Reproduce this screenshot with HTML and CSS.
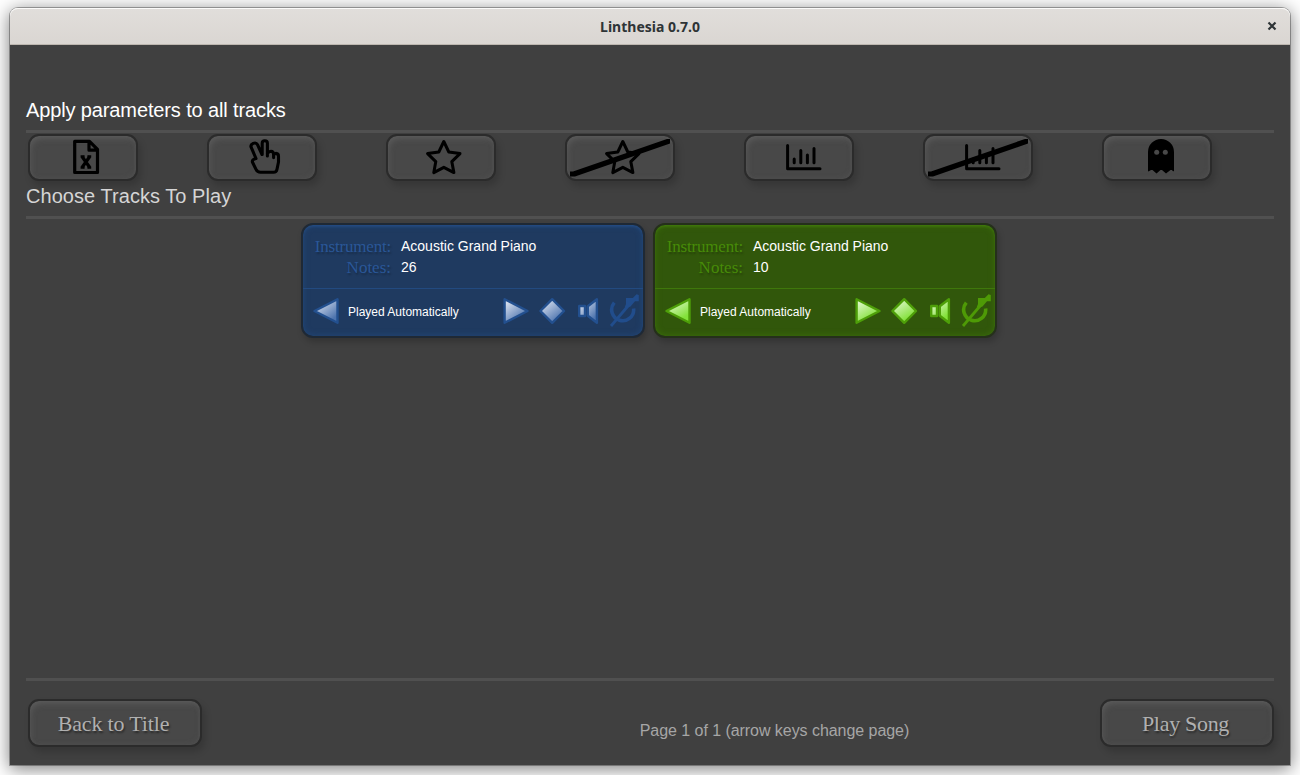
FILE: index.html
```html
<!DOCTYPE html>
<html lang="en">
<head>
<meta charset="utf-8">
<title>Linthesia 0.7.0</title>
<link rel="stylesheet" href="styles.css">
</head>
<body>
<svg class="defs" width="0" height="0" aria-hidden="true">
  <defs>
    <linearGradient id="blue" x1="0" y1="0" x2="0.8" y2="1"><stop offset="0.15" stop-color="#d3dcec"/><stop offset="0.9" stop-color="#4d74ae"/></linearGradient>
    <linearGradient id="green" x1="0" y1="0" x2="0.6" y2="1"><stop offset="0.15" stop-color="#dcf7c6"/><stop offset="0.9" stop-color="#83e13a"/></linearGradient>
    <symbol id="star" viewBox="0 0 110 47"><path d="M57.8 7.5 62.8 18 74 19.6 65.8 27.6 67.9 38.6 57.8 33.3 47.8 38.6 49.8 27.6 41.6 19.6 52.8 18Z" fill="none" stroke="#000" stroke-width="3" stroke-linejoin="round"/></symbol>
    <symbol id="chart" viewBox="0 0 110 47"><path d="M43.6 11.5V34.7H76M50.2 25V28.7M56.8 16.5V28.7M63.4 21V28.7M70 14.5V28.7" fill="none" stroke="#000" stroke-width="3" stroke-linecap="round" stroke-linejoin="round"/></symbol>
    <symbol id="slash" viewBox="0 0 110 47"><path d="M5 37.5H8L102 5H105V9.5L10 42.5H5Z"/></symbol>
    <symbol id="left" viewBox="0 0 30 36"><path d="M3.5 18 26.5 6.2V29.8Z"/></symbol>
    <symbol id="right" viewBox="0 0 30 36"><path d="M26.5 18 3.6 6.2V29.8Z"/></symbol>
    <symbol id="diamond" viewBox="0 0 30 36"><path d="M15.2 6.2 27 18 15.2 29.8 3.4 18Z"/></symbol>
    <symbol id="speaker" viewBox="0 0 30 36"><path d="M6.2 13H12V23H6.2ZM14.8 13.2 23.9 6.2V29.8L14.8 22.8Z"/></symbol>
    <symbol id="retry" viewBox="0 0 30 36"><path d="M5.3 9.6A11 11 0 1 0 24.6 15.5" fill="none" stroke="currentColor" stroke-width="3.6"/><path d="M2 33 19 13" fill="none" stroke="currentColor" stroke-width="2.8"/><path d="M17 5H23.8L27.5 1.2 29.8 2V8.2H26L21.5 13.5 16.5 15.5 15.8 14 17 11Z" fill="currentColor"/></symbol>
  </defs>
</svg>
<div class="window">
  <header class="titlebar"><span class="title">Linthesia 0.7.0</span><svg class="close" viewBox="0 0 10 10"><path d="M1.5 1.5 8.5 8.5M8.5 1.5 1.5 8.5"/></svg></header>
  <main class="content">
    <h1 class="heading heading-all"><span>Apply parameters to all tracks</span></h1>
    <div class="toolbar">
      <button class="btn tool"><svg viewBox="0 0 110 47"><path d="M46.7 7.3H61.5L69.5 15.3V38.5H46.7ZM61 7.5V16.2H69.5" fill="none" stroke="#000" stroke-width="3.2" stroke-linejoin="round"/><path d="M54 22.5 61.8 33.5M61.8 22.5 54 33.5" fill="none" stroke="#000" stroke-width="3.2"/><path d="M52.6 22.4H56.6M59.4 22.4H63.2M52.6 33.6H56.6M59.4 33.6H63.2" fill="none" stroke="#000" stroke-width="2.4"/></svg></button>
      <button class="btn tool"><svg viewBox="0 0 110 47"><path d="M55.2 20.5V9.2Q55.2 6.7 57.8 6.7T60.4 9.2V22M55 20.5 50.6 10.8Q49.2 8.2 46.2 9.4 43.2 10.8 44.1 13.2L49 24.5Q44.8 25.4 45.4 28L49 35.4Q50.4 38.3 53.5 38.3H66.6Q69.4 38.3 70 35.2L71.5 28V22.3Q71.5 19.6 69 19.4L66.6 20.4Q66.5 17.3 64 17.3 61.6 17.4 60.4 19.5M66.6 20V23.6" fill="none" stroke="#000" stroke-width="3.1" stroke-linecap="round" stroke-linejoin="round"/></svg></button>
      <button class="btn tool"><svg viewBox="0 0 110 47"><use href="#star"/></svg></button>
      <button class="btn tool"><svg viewBox="0 0 110 47"><use href="#star"/><use href="#slash"/></svg></button>
      <button class="btn tool"><svg viewBox="0 0 110 47"><use href="#chart"/></svg></button>
      <button class="btn tool"><svg viewBox="0 0 110 47"><use href="#chart"/><use href="#slash"/></svg></button>
      <button class="btn tool"><svg viewBox="0 0 110 47"><path d="M46 37V18A13 13 0 0 1 72 18V37Q71 37.8 70 36L68.5 36 64 39.5 60 36H58.5L54.5 39.5 50.5 36H49L46.5 37.5Z"/><g fill="#484848"><circle cx="54.7" cy="18.3" r="2.5"/><circle cx="63.3" cy="18.3" r="2.5"/></g></svg></button>
    </div>
    <h2 class="heading heading-choose"><span>Choose Tracks To Play</span></h2>
    <div class="tracks">
      <section class="card card-blue">
        <div class="info">
          <span class="key">Instrument:</span><span class="value">Acoustic Grand Piano</span>
          <span class="key key-notes">Notes:</span><span class="value">26</span>
        </div>
        <div class="controls">
          <svg class="glyph"><use href="#left"/></svg><span class="mode">Played Automatically</span><svg class="glyph"><use href="#right"/></svg><svg class="glyph"><use href="#diamond"/></svg><svg class="glyph"><use href="#speaker"/></svg><svg class="retry"><use href="#retry"/></svg>
        </div>
      </section>
      <section class="card card-green">
        <div class="info">
          <span class="key">Instrument:</span><span class="value">Acoustic Grand Piano</span>
          <span class="key key-notes">Notes:</span><span class="value">10</span>
        </div>
        <div class="controls">
          <svg class="glyph"><use href="#left"/></svg><span class="mode">Played Automatically</span><svg class="glyph"><use href="#right"/></svg><svg class="glyph"><use href="#diamond"/></svg><svg class="glyph"><use href="#speaker"/></svg><svg class="retry"><use href="#retry"/></svg>
        </div>
      </section>
    </div>
    <footer class="footer">
      <button class="btn nav nav-back">Back to Title</button>
      <span class="page">Page 1 of 1 (arrow keys change page)</span>
      <button class="btn nav nav-play">Play Song</button>
    </footer>
  </main>
</div>
</body>
</html>
```
FILE: styles.css
```css
* { box-sizing: border-box; }
body {
  margin: 0;
  height: 775px;
  padding: 8px 10px 10px;
  overflow: hidden;
  background: #fff;
  font-family: "Liberation Sans", Arial, sans-serif;
}
.defs { position: absolute; }
.window {
  height: 757px;
  display: flex;
  flex-direction: column;
  border-radius: 8px 8px 0 0;
  box-shadow: 0 0 0 1px rgba(0, 0, 0, .3), 0 3px 18px 1px rgba(0, 0, 0, .5);
}
.titlebar {
  height: 37px;
  flex: none;
  display: grid;
  grid-template-columns: 1fr auto 1fr;
  align-items: center;
  border-radius: 8px 8px 0 0;
  border-bottom: 1px solid #bdb7b0;
  box-shadow: inset 0 1px #fbfaf9;
  background: linear-gradient(#e1dedb, #dad6d2);
}
.title {
  grid-column: 2;
  font: bold 14px "Noto Sans", sans-serif;
  color: #2e3436;
}
.close { width: 10px; height: 10px; justify-self: end; margin-right: 13px; }
.close path { stroke: #2e3436; stroke-width: 2.2; }
.content {
  flex: 1;
  display: flex;
  flex-direction: column;
  padding: 0 16px;
  background: #404040;
}
.heading {
  margin: 0;
  font-weight: normal;
  font-size: 20px;
  line-height: 24px;
  border-bottom: 3px solid #505050;
}
.heading-all { height: 88px; padding-top: 53px; color: #fff; letter-spacing: -.125px; }
.heading-choose { height: 38px; padding-top: 3px; color: #d5d5d5; letter-spacing: .05px; }
.toolbar { display: flex; gap: 69px; padding: 1px 2px 0; height: 48px; }
.btn {
  flex: none;
  padding: 0;
  border: 2px solid #2b2b2b;
  border-radius: 11px;
  background: #484848;
  box-shadow: inset 2px 4px 6px -2px #5e5e5e, inset -2px -2px 5px -2px #525252, 3px 5px 7px rgba(0, 0, 0, .16);
}
.tool { width: 110px; height: 47px; }
.tool svg { display: block; width: 110px; height: 47px; margin: -2px; }
.tracks { display: flex; justify-content: center; gap: 8px; padding-top: 4px; margin-right: 2px; }
.card {
  width: 344px;
  height: 115px;
  border: 2px solid;
  border-radius: 12px;
}
.card-blue {
  color: #214d8c;
  background: #1f3a60;
  border-color: #1f2935;
  box-shadow: inset 0 0 6px #224879, inset 0 2px 3px -1px #28579a, 2px 4px 6px rgba(0, 0, 0, .2);
}
.card-green {
  color: #4e9a06;
  background: #31570b;
  border-color: #25301b;
  box-shadow: inset 0 0 6px #3b700b, inset 0 2px 3px -1px #4a8c0b, 2px 4px 6px rgba(0, 0, 0, .2);
}
.info {
  height: 64px;
  padding: 10px 0 0 12px;
  display: grid;
  grid-template-columns: 76px 1fr;
  grid-auto-rows: 21px;
  column-gap: 10px;
  align-items: center;
  border-bottom: 1px solid;
}
.card-blue .info { border-color: #224a80; }
.card-green .info { border-color: #3f770b; }
.key {
  justify-self: end;
  padding-top: 1px;
  font: 17px/21px "Liberation Serif", serif;
  letter-spacing: -.2px;
  text-shadow: 1px 2px 2px rgba(0, 0, 0, .25);
  white-space: nowrap;
}
.key-notes { letter-spacing: 0; }
.card-blue .key { color: #2a5798; }
.card-green .key { color: #478b08; }
.value { color: #fff; font-size: 14px; }
.controls { display: flex; gap: 6px; padding: 4px 4px 0 8px; }
.glyph, .retry { flex: none; width: 30px; height: 36px; stroke-width: 2.4; stroke-linejoin: round; }
.card-blue .glyph { fill: url(#blue); stroke: #23508f; }
.card-green .glyph { fill: url(#green); stroke: #4e9f09; }
.mode { width: 154px; margin-right: -1px; padding-left: 1px; font-size: 12px; line-height: 38px; color: #fff; }
.footer {
  display: grid;
  grid-template-columns: 174px 1fr 174px;
  margin-top: auto;
  height: 87px;
  padding: 18px 0 0 2px;
  border-top: 3px solid #505050;
}
.nav {
  height: 48px;
  padding: 2px 3px 0 0;
  font: 22px "Liberation Serif", serif;
  letter-spacing: -.15px;
  color: #b0b0b0;
  text-shadow: 1px 2px 2px rgba(0, 0, 0, .45);
}
.nav-play { letter-spacing: -.3px; }
.page { justify-self: center; margin: 23px -247px 0 0; font-size: 16px; line-height: 18px; letter-spacing: -.05px; color: #a6a6a6; }
```
